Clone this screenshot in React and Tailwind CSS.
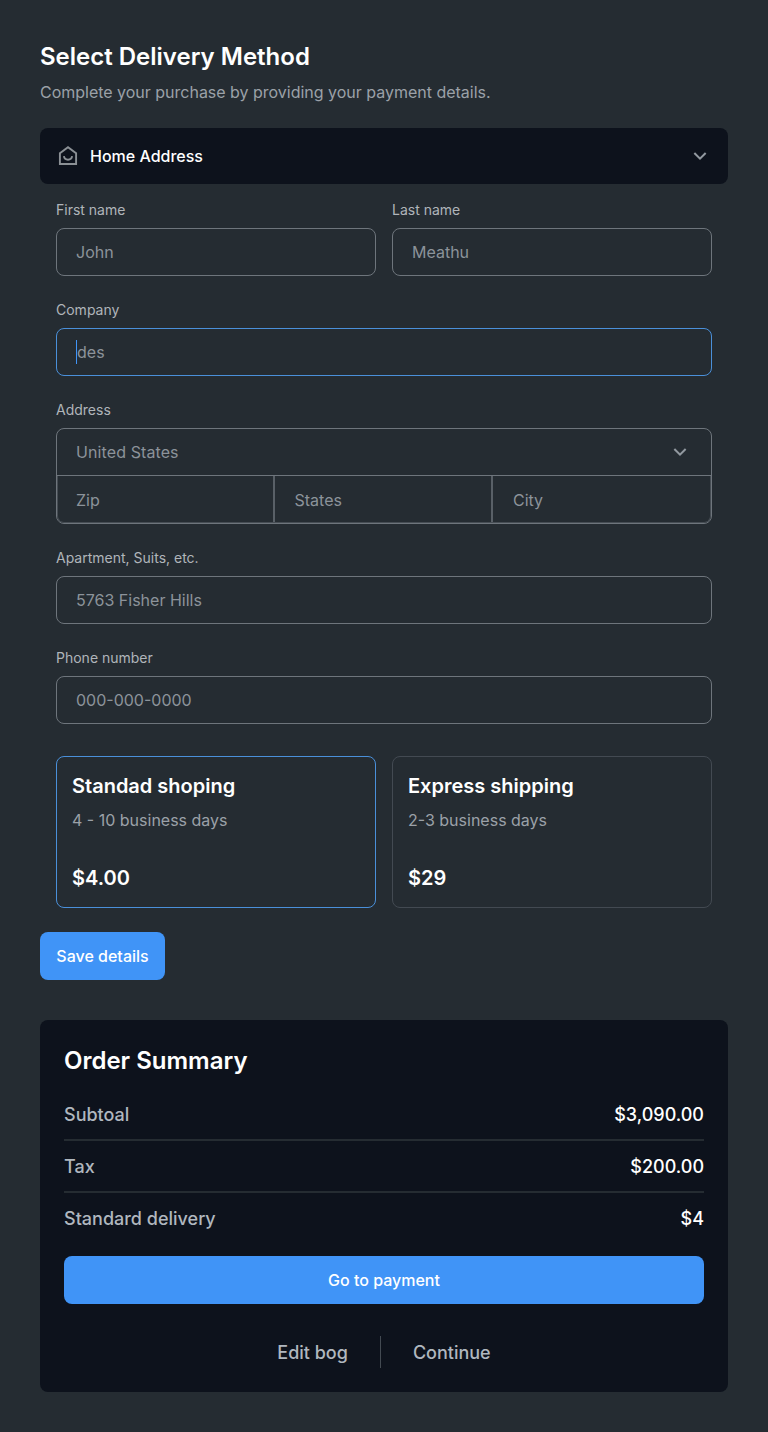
import React from "react";

function Chevron() {
  return (
    <svg className="size-6" viewBox="0 0 24 24" fill="#9299a0">
      <path d="M12 13.172l4.95-4.95 1.414 1.414L12 16 5.636 9.636 7.05 8.222z" />
    </svg>
  );
}

function HomeIcon() {
  return (
    <svg className="size-6" viewBox="0 0 24 24" fill="none" stroke="#8b9095" strokeWidth="1.9">
      <path d="M3.9 20V9.2L12 3.2l8.1 6V20z" />
      <path d="M7.9 12.2a4.15 4.15 0 0 0 8.2 0" />
    </svg>
  );
}

function Field({ label, placeholder, active }) {
  return (
    <div className="flex flex-1 flex-col gap-2">
      <label className="text-sm text-[#b0b5ba]">{label}</label>
      <div className={`flex h-12 items-center rounded-lg border px-[19px] ${active ? "border-[#4a90da]" : "border-[#6e757c]"}`}>
        {active && <span className="h-6 w-px bg-[#4094f7]" />}
        <span className="text-[#8c939a]">{placeholder}</span>
      </div>
    </div>
  );
}

function Shipping({ title, days, price, active }) {
  return (
    <div className={`flex h-[152px] flex-1 flex-col rounded-lg border px-[15px] pt-[13px] ${active ? "border-[#4a90da]" : "border-[#434a52]"}`}>
      <h3 className="text-xl leading-8 font-semibold text-white">{title}</h3>
      <p className="mt-[6px] leading-6 text-[#9ba1a8]">{days}</p>
      <p className="mt-[30px] text-xl leading-8 font-semibold text-white">{price}</p>
    </div>
  );
}

function Row({ label, value, last }) {
  return (
    <div className={`flex h-[52px] items-center justify-between border-b-2 pt-[2px] text-lg font-medium ${last ? "border-transparent" : "border-[#252c32]"}`}>
      <span className="text-[#b0b7bf]">{label}</span>
      <span className="text-white">{value}</span>
    </div>
  );
}

export default function App() {
  return (
    <main className="min-h-[1432px] bg-[#252c32] p-10 font-['Inter',sans-serif] text-base">
      <h1 className="pt-px text-2xl leading-8 font-semibold text-white">Select Delivery Method</h1>
      <p className="mt-[7px] leading-6 tracking-[-0.01px] text-[#9ba1a8]">Complete your purchase by providing your payment details.</p>

      <div className="mt-6 flex h-14 items-center rounded-lg bg-[#0d121c] px-4">
        <HomeIcon />
        <span className="ml-[10px] flex-1 font-medium text-white">Home Address</span>
        <Chevron />
      </div>

      <form className="mt-4 flex flex-col gap-6 px-4">
        <div className="flex gap-4">
          <Field label="First name" placeholder="John" />
          <Field label="Last name" placeholder="Meathu" />
        </div>
        <Field label="Company" placeholder="des" active />
        <div className="flex flex-col gap-2">
          <label className="text-sm text-[#b0b5ba]">Address</label>
          <div className="h-24 rounded-lg border border-[#6e757c] text-[#8c939a]">
            <div className="flex h-[47px] items-center justify-between border-b border-[#6e757c] px-[19px]">
              <span className="tracking-[0.1px]">United States</span>
              <Chevron />
            </div>
            <div className="flex h-[47px] rounded-b-[7px] border-x border-b border-[#464d54]">
              <span className="flex w-[217px] items-center border-r-2 border-[#596067] pt-px pl-[18px]">Zip</span>
              <span className="flex w-[218px] items-center border-r-2 border-[#596067] pt-px pl-[19.5px]">States</span>
              <span className="flex flex-1 items-center pt-px pl-5">City</span>
            </div>
          </div>
        </div>
        <Field label="Apartment, Suits, etc." placeholder="5763 Fisher Hills" />
        <Field label="Phone number" placeholder="000-000-0000" />
        <div className="mt-2 flex gap-4">
          <Shipping title="Standad shoping" days="4 - 10 business days" price="$4.00" active />
          <Shipping title="Express shipping" days="2-3 business days" price="$29" />
        </div>
      </form>

      <button className="mt-6 flex h-12 w-[125px] items-center justify-center rounded-lg bg-[#4094f7] font-medium text-white">Save details</button>

      <section className="mt-10 h-[372px] rounded-lg bg-[#0d121c] px-6 pt-[25px]">
        <h2 className="text-2xl leading-8 font-semibold text-white">Order Summary</h2>
        <div className="mt-3">
          <Row label="Subtoal" value="$3,090.00" />
          <Row label="Tax" value="$200.00" />
          <Row label="Standard delivery" value="$4" last />
        </div>
        <button className="mt-[11px] flex h-12 w-full items-center justify-center rounded-lg bg-[#4094f7] font-medium text-white">Go to payment</button>
        <div className="mt-8 flex h-8 items-center justify-center text-lg font-medium text-[#b0b7bf]">
          <span className="pt-[2px]">Edit bog</span>
          <span className="mx-8 h-8 w-px bg-[#434a52]" />
          <span className="pt-[2px]">Continue</span>
        </div>
      </section>
    </main>
  );
}
